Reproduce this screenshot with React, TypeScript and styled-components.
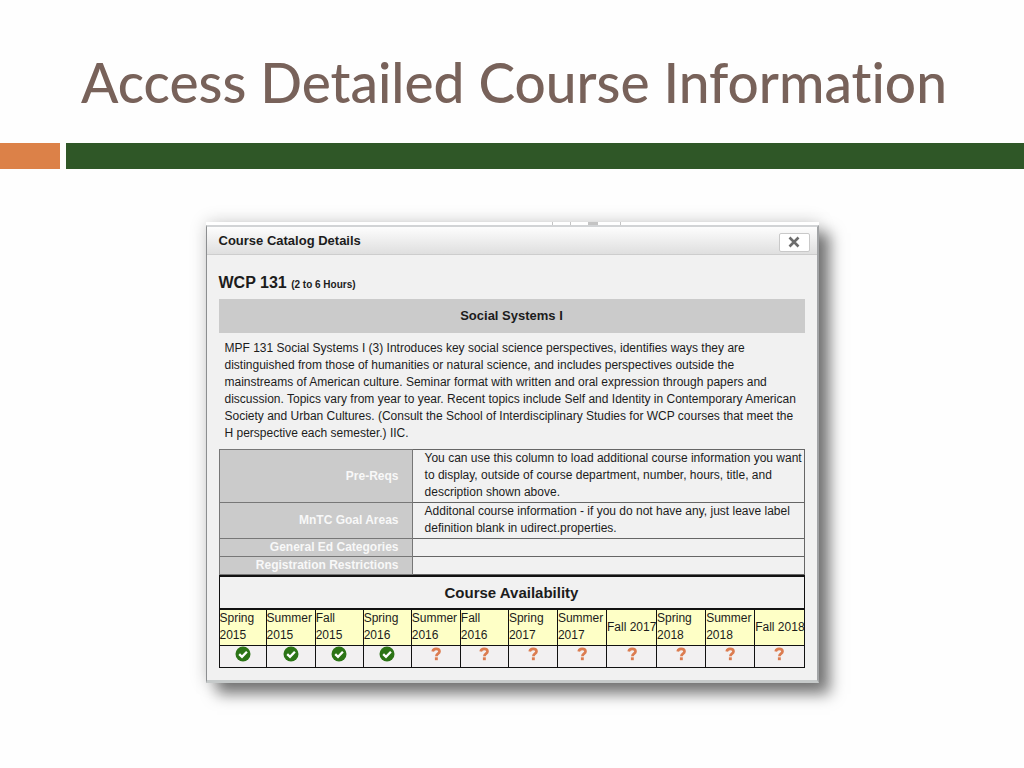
import React from "react";
import styled, { createGlobalStyle } from "styled-components";

const GlobalStyle = createGlobalStyle`
  * {
    box-sizing: border-box;
  }
  body {
    margin: 0;
    background: #fefefe;
    color: #1c1c1c;
    font-family: "Liberation Sans", Arial, Helvetica, sans-serif;
  }
`;

const Slide = styled.main`
  min-height: 100vh;
  display: flex;
  flex-direction: column;
`;

const Title = styled.h1`
  margin: 0;
  padding: 46px 16px 25px 20px;
  color: #78625a;
  font-family: Lato, sans-serif;
  font-size: 55px;
  font-weight: 500;
  font-variant-ligatures: none;
  line-height: 72px;
  text-align: center;
`;

const Band = styled.div`
  display: flex;
  gap: 6px;
  height: 26px;
`;

const BandBlock = styled.div<{ $accent?: boolean }>`
  flex: ${(p) => (p.$accent ? "0 0 60px" : "1")};
  background: ${(p) => (p.$accent ? "#dc8148" : "#2f5727")};
`;

const Stage = styled.div`
  display: flex;
  justify-content: center;
  padding: 53px 16px 80px;
`;

const Shot = styled.div`
  width: 100%;
  max-width: 613px;
  background: #fff;
  box-shadow: 11px 11px 14px rgba(0, 0, 0, 0.5), 0 0 16px rgba(0, 0, 0, 0.18);
`;

const Edge = styled.div`
  display: flex;
  justify-content: center;
  height: 3px;
  padding-left: 166px;
`;

const EdgeMark = styled.span<{ $wide?: boolean }>`
  width: ${(p) => (p.$wide ? "10px" : "1px")};
  height: 3px;
  margin-right: ${(p) => (p.$wide ? "22px" : "17px")};
  background: #c4c4c4;
`;

const Dialog = styled.section`
  border: solid;
  border-width: 2px 2px 3px 1px;
  border-color: #d2d4d6 #a2a4a6 #c6caca #8c8e90;
  background: #f1f1f1;
`;

const DialogHeader = styled.header`
  display: flex;
  align-items: center;
  justify-content: space-between;
  height: 28px;
  padding: 0 7px 0 12px;
  border-bottom: 1px solid #cdcdcd;
  background: linear-gradient(#fdfdfd, #dfdfdf);
`;

const DialogTitle = styled.h2`
  margin: 0;
  font-size: 13px;
  line-height: 16px;
`;

const CloseButton = styled.button`
  display: flex;
  align-items: center;
  justify-content: center;
  width: 31px;
  height: 19px;
  margin-top: 3px;
  padding: 0;
  border: 1px solid #c9c9c9;
  border-radius: 2px;
  background: #fff;
`;

const DialogBody = styled.div`
  padding: 18px 12px 12px 12px;
`;

const CourseCode = styled.h3`
  margin: 0 0 4px;
  font-size: 16px;
  line-height: 20px;
`;

const Hours = styled.small`
  font-size: 10px;
`;

const CourseName = styled.h4`
  margin: 0;
  background: #cbcbcb;
  font-size: 13px;
  line-height: 34px;
  text-align: center;
`;

const Description = styled.p`
  margin: 0;
  padding: 7px 6px 7px;
  font-size: 12px;
  line-height: 17px;
  white-space: pre-line;
`;

const InfoTable = styled.table`
  width: 100%;
  border: 1px solid #333;
  border-bottom: 0;
  border-collapse: collapse;
  table-layout: fixed;
`;

const InfoLabel = styled.th`
  width: 33%;
  height: 18px;
  padding: 0 13px 0 0;
  border: 1px solid #777;
  background: #cbcbcb;
  color: #f8f8f8;
  font-size: 12px;
  line-height: 17px;
  text-align: right;
`;

const InfoValue = styled.td`
  padding: 0 0 1px 12px;
  border: 1px solid #666;
  font-size: 12px;
  line-height: 17px;
  white-space: pre;
`;

const AvailabilityTable = styled.table`
  width: 100%;
  border: 1px solid #111;
  border-collapse: collapse;
  table-layout: fixed;
`;

const AvailabilityTitle = styled.th`
  height: 33px;
  padding: 0;
  border: solid #111;
  border-width: 2px 1px;
  font-size: 15px;
  line-height: 20px;
`;

const Term = styled.th`
  height: 36px;
  padding: 0;
  border: 1px solid #111;
  background: #feffc6;
  font-size: 12px;
  font-weight: 400;
  line-height: 17px;
  text-align: left;
  white-space: pre;
`;

const Status = styled.td`
  height: 22px;
  padding: 0;
  border: 1px solid #111;
  background: #f2f0f1;
  text-align: center;
`;

const StatusIcon = styled.svg`
  display: block;
  margin: 0 auto 4px;
`;

const info = [
  {
    label: "Pre-Reqs",
    value:
      "You can use this column to load additional course information you want\nto display, outside of course department, number, hours, title, and\ndescription shown above.",
  },
  {
    label: "MnTC Goal Areas",
    value:
      "Additonal course information - if you do not have any, just leave label\ndefinition blank in udirect.properties.",
  },
  { label: "General Ed Categories", value: "" },
  { label: "Registration Restrictions", value: "" },
];

const terms = [
  { name: "Spring\n2015", offered: true, width: 47 },
  { name: "Summer\n2015", offered: true, width: 49 },
  { name: "Fall\n2015", offered: true, width: 48 },
  { name: "Spring\n2016", offered: true, width: 48 },
  { name: "Summer\n2016", offered: false, width: 49 },
  { name: "Fall\n2016", offered: false, width: 48 },
  { name: "Spring\n2017", offered: false, width: 49 },
  { name: "Summer\n2017", offered: false, width: 49 },
  { name: "Fall 2017", offered: false, width: 50 },
  { name: "Spring\n2018", offered: false, width: 49 },
  { name: "Summer\n2018", offered: false, width: 49 },
  { name: "Fall 2018", offered: false, width: 49 },
];

function Offered() {
  return (
    <StatusIcon width="16" height="16" viewBox="0 0 16 16" role="img" aria-label="Offered">
      <circle cx="8" cy="8" r="7.5" fill="#2c7416" />
      <path d="M4.2 8.2 7 10.9 11.9 5.8" fill="none" stroke="#fff" strokeWidth="2.3" />
    </StatusIcon>
  );
}

function Unknown() {
  return (
    <StatusIcon width="16" height="16" viewBox="0 0 16 16" role="img" aria-label="Unknown">
      <path
        d="M4.7 5.4C5.1 3.4 6.3 2.8 8.1 2.8c2.2 0 3.4 1 3.4 2.6 0 2.3-3.1 2.1-3.1 4.8"
        fill="none"
        stroke="#dc7c50"
        strokeWidth="2.7"
      />
      <rect x="6.9" y="11.3" width="2.9" height="2.9" fill="#dc7c50" />
    </StatusIcon>
  );
}

export default function App() {
  return (
    <Slide>
      <GlobalStyle />
      <Title>Access Detailed Course Information</Title>
      <Band>
        <BandBlock $accent />
        <BandBlock />
      </Band>
      <Stage>
        <Shot>
          <Edge>
            <EdgeMark />
            <EdgeMark />
            <EdgeMark $wide />
            <EdgeMark />
          </Edge>
          <Dialog aria-labelledby="dialog-title">
            <DialogHeader>
              <DialogTitle id="dialog-title">Course Catalog Details</DialogTitle>
              <CloseButton type="button" aria-label="Close">
                <svg width="12" height="12" viewBox="0 0 12 12">
                  <path d="M1.5 1.5 10.5 10.5M10.5 1.5 1.5 10.5" stroke="#6c6c6c" strokeWidth="2.6" />
                </svg>
              </CloseButton>
            </DialogHeader>
            <DialogBody>
              <CourseCode>
                WCP 131 <Hours>(2 to 6 Hours)</Hours>
              </CourseCode>
              <CourseName>Social Systems I</CourseName>
              <Description>
                {
                  "MPF 131 Social Systems I (3) Introduces key social science perspectives, identifies ways they are\ndistinguished from those of humanities or natural science, and includes perspectives outside the\nmainstreams of American culture. Seminar format with written and oral expression through papers and\ndiscussion. Topics vary from year to year. Recent topics include Self and Identity in Contemporary American\nSociety and Urban Cultures. (Consult the School of Interdisciplinary Studies for WCP courses that meet the\nH perspective each semester.) IIC."
                }
              </Description>
              <InfoTable>
                <tbody>
                  {info.map((row) => (
                    <tr key={row.label}>
                      <InfoLabel scope="row">{row.label}</InfoLabel>
                      <InfoValue>{row.value}</InfoValue>
                    </tr>
                  ))}
                </tbody>
              </InfoTable>
              <AvailabilityTable>
                <colgroup>
                  {terms.map((term) => (
                    <col key={term.name} width={term.width} />
                  ))}
                </colgroup>
                <thead>
                  <tr>
                    <AvailabilityTitle colSpan={terms.length}>Course Availability</AvailabilityTitle>
                  </tr>
                  <tr>
                    {terms.map((term) => (
                      <Term key={term.name} scope="col">
                        {term.name}
                      </Term>
                    ))}
                  </tr>
                </thead>
                <tbody>
                  <tr>
                    {terms.map((term) => (
                      <Status key={term.name}>{term.offered ? <Offered /> : <Unknown />}</Status>
                    ))}
                  </tr>
                </tbody>
              </AvailabilityTable>
            </DialogBody>
          </Dialog>
        </Shot>
      </Stage>
    </Slide>
  );
}
